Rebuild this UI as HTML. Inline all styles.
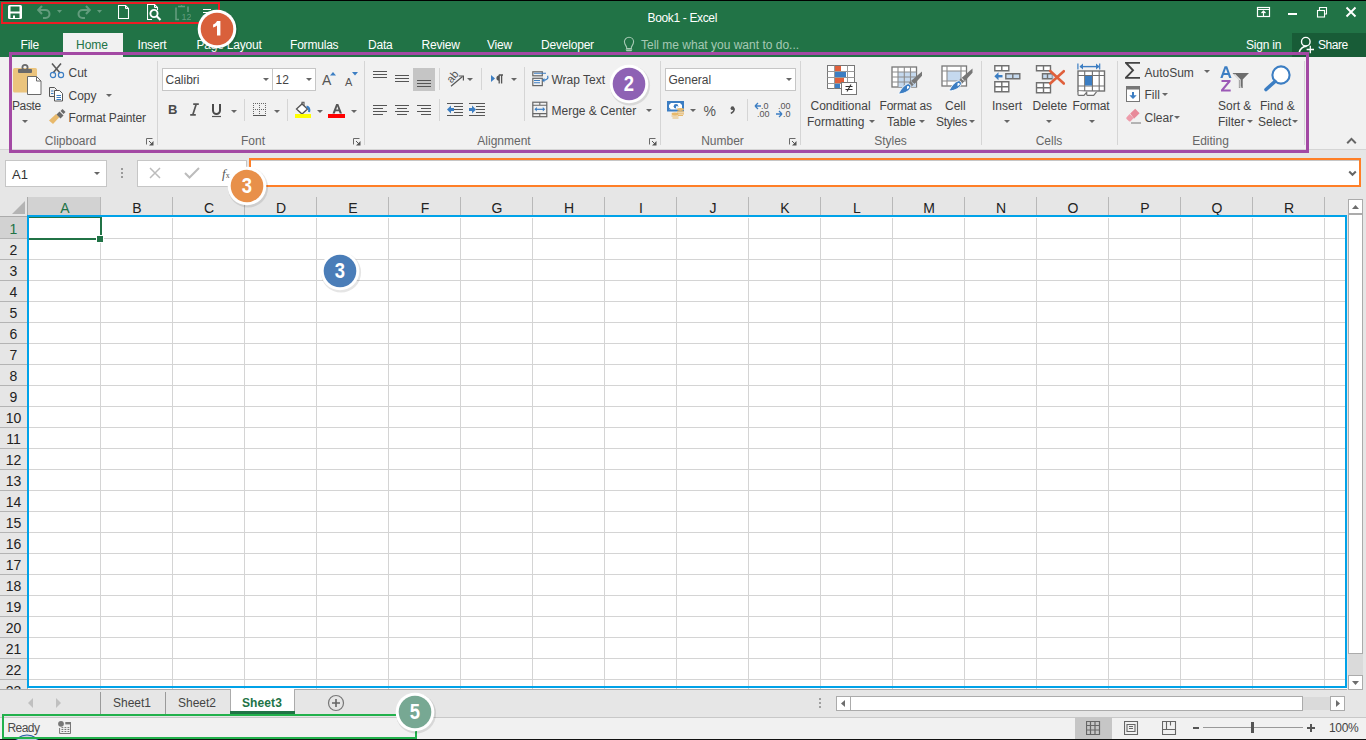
<!DOCTYPE html><html><head><meta charset="utf-8"><style>
html,body{margin:0;padding:0;}
body{width:1366px;height:740px;overflow:hidden;position:relative;background:#fff;font-family:"Liberation Sans", sans-serif;}
.b{position:absolute;box-sizing:border-box;}
.t{position:absolute;white-space:nowrap;font-family:"Liberation Sans", sans-serif;}
</style></head><body>
<div class="b" style="left:0px;top:0px;width:1366px;height:57px;background:#217346"></div>
<div class="b" style="left:0px;top:0px;width:1366px;height:1px;background:#000"></div>
<svg class="b" style="left:8px;top:5px;" width="14" height="14" viewBox="0 0 14 14"><rect x="0" y="0" width="14" height="14" rx="1.5" fill="#fff"/><rect x="2.5" y="1.5" width="9" height="5" fill="#217346"/><rect x="2.5" y="8.5" width="9" height="4.5" fill="#217346"/><rect x="5" y="10.5" width="2" height="2.5" fill="#fff"/></svg>
<svg class="b" style="left:37px;top:5px;" width="15" height="14" viewBox="0 0 15 14"><path d="M5 1L1.2 5 5 9" fill="none" stroke="#639c7d" stroke-width="2"/><path d="M1.5 5H8.5A4 4 0 0 1 8.5 13H6" fill="none" stroke="#639c7d" stroke-width="2"/></svg>
<svg class="b" style="left:57px;top:10px;" width="6" height="4" viewBox="0 0 6 4"><path d="M0 0h5l-2.5 3z" fill="#639c7d"/></svg>
<svg class="b" style="left:77px;top:5px;" width="15" height="14" viewBox="0 0 15 14"><path d="M9 1l3.8 4L9 9" fill="none" stroke="#639c7d" stroke-width="2"/><path d="M12.5 5H5.5A4 4 0 0 0 5.5 13H8" fill="none" stroke="#639c7d" stroke-width="2"/></svg>
<svg class="b" style="left:97px;top:10px;" width="6" height="4" viewBox="0 0 6 4"><path d="M0 0h5l-2.5 3z" fill="#639c7d"/></svg>
<svg class="b" style="left:118px;top:5px;" width="12" height="15" viewBox="0 0 12 15"><path d="M0.5 0.5H7.5L10.5 3.5V13.5H0.5Z" fill="none" stroke="#fff" stroke-width="1.1"/><path d="M7.5 0.5V3.5H10.5" fill="none" stroke="#fff" stroke-width="1"/></svg>
<svg class="b" style="left:147px;top:4px;" width="15" height="17" viewBox="0 0 15 17"><path d="M5 15.5H0.5V0.5H7.5L10.5 3.5V6" fill="none" stroke="#fff" stroke-width="1.1"/><path d="M7.5 0.5V3.5H10.5" fill="none" stroke="#fff" stroke-width="1"/><circle cx="7" cy="9.5" r="3.6" fill="none" stroke="#fff" stroke-width="1.9"/><path d="M9.5 12l4 4" stroke="#fff" stroke-width="2.2"/></svg>
<svg class="b" style="left:175px;top:5px;" width="16" height="16" viewBox="0 0 16 16"><path d="M1 2.5V14.5H4 M3 1.5h7 M13 1.5V7" fill="none" stroke="#639c7d" stroke-width="1.6"/><path d="M6.5 0l2 2h-4z" fill="#639c7d"/><text x="6.5" y="15" font-size="9" font-family="Liberation Sans" fill="#639c7d">12</text></svg>
<svg class="b" style="left:203px;top:8px;" width="10" height="8" viewBox="0 0 10 8"><path d="M0 1.5h8" stroke="#fff" stroke-width="1"/><path d="M0 4.5h8" stroke="#fff" stroke-width="1"/><path d="M1.5 6h5l-2.5 2z" fill="#fff"/></svg>
<div class="t " style="left:647.5px;top:11.03px;font-size:12px;line-height:14px;color:#fff;letter-spacing:-0.35px">Book1 - Excel</div>
<svg class="b" style="left:1256px;top:6px;" width="16" height="12" viewBox="0 0 16 12"><rect x="1.5" y="1.5" width="12" height="9" fill="none" stroke="#fff" stroke-width="1.2"/><path d="M1.5 3.5h12" stroke="#fff" stroke-width="1"/><path d="M7.5 10V5 M5.5 7l2-2 2 2" fill="none" stroke="#fff" stroke-width="1.2"/></svg>
<div class="b" style="left:1288px;top:13px;width:9px;height:2px;background:#fff"></div>
<svg class="b" style="left:1316px;top:6px;" width="12" height="12" viewBox="0 0 12 12"><rect x="1.5" y="4.5" width="7" height="6.5" fill="none" stroke="#fff" stroke-width="1.1"/><path d="M3.5 4.5V1.5h7v6.5H8.5" fill="none" stroke="#fff" stroke-width="1.1"/></svg>
<svg class="b" style="left:1345px;top:6px;" width="12" height="12" viewBox="0 0 12 12"><path d="M1.5 1.5l9 9 M10.5 1.5l-9 9" stroke="#fff" stroke-width="1.9"/></svg>
<div class="b" style="left:63px;top:33px;width:60px;height:24px;background:#f1f1f1"></div>
<div class="b" style="left:1292px;top:33px;width:74px;height:24px;background:#185c37"></div>
<div class="t " style="left:20.5px;top:37.63px;font-size:12px;line-height:14px;color:#fff;letter-spacing:-0.2px">File</div>
<div class="t " style="left:137.5px;top:37.63px;font-size:12px;line-height:14px;color:#fff;letter-spacing:-0.2px">Insert</div>
<div class="t " style="left:196.5px;top:37.63px;font-size:12px;line-height:14px;color:#fff;letter-spacing:-0.2px">Page Layout</div>
<div class="t " style="left:290px;top:37.63px;font-size:12px;line-height:14px;color:#fff;letter-spacing:-0.2px">Formulas</div>
<div class="t " style="left:368px;top:37.63px;font-size:12px;line-height:14px;color:#fff;letter-spacing:-0.2px">Data</div>
<div class="t " style="left:421.5px;top:37.63px;font-size:12px;line-height:14px;color:#fff;letter-spacing:-0.2px">Review</div>
<div class="t " style="left:487px;top:37.63px;font-size:12px;line-height:14px;color:#fff;letter-spacing:-0.2px">View</div>
<div class="t " style="left:541px;top:37.63px;font-size:12px;line-height:14px;color:#fff;letter-spacing:-0.2px">Developer</div>
<div class="t " style="left:1246px;top:37.63px;font-size:12px;line-height:14px;color:#fff;letter-spacing:-0.2px">Sign in</div>
<div class="t " style="left:76px;top:37.63px;font-size:12px;line-height:14px;color:#217346;">Home</div>
<div class="t " style="left:1318px;top:37.63px;font-size:12px;line-height:14px;color:#fff;letter-spacing:-0.45px">Share</div>
<svg class="b" style="left:623px;top:36px;" width="12" height="16" viewBox="0 0 12 16"><path d="M6 1.2A4.6 4.6 0 0 1 10.6 5.8C10.6 8 9.3 9.5 8.4 11V12.6H3.6V11C2.7 9.5 1.4 8 1.4 5.8A4.6 4.6 0 0 1 6 1.2z" fill="none" stroke="#a6c9b4" stroke-width="1.1"/><path d="M2.5 13.6h7l-1 1.6h-5z" fill="#a6c9b4"/></svg>
<div class="t " style="left:641px;top:37.73px;font-size:12px;line-height:14px;color:#a6c9b4;">Tell me what you want to do...</div>
<svg class="b" style="left:1298px;top:36px;" width="17" height="18" viewBox="0 0 17 18"><circle cx="7.8" cy="5.7" r="4.3" fill="none" stroke="#fff" stroke-width="1.4"/><path d="M1.2 16.5c.8-3.6 3.4-6 7.5-6.3" fill="none" stroke="#fff" stroke-width="1.4"/><path d="M12.3 9.8v7.4 M8.6 13.5h7.4" stroke="#fff" stroke-width="1.3"/></svg>
<div class="b" style="left:0px;top:57px;width:1366px;height:92px;background:#f1f1f1"></div>
<div class="b" style="left:0px;top:149px;width:1366px;height:1px;background:#d5d5d5"></div>
<div class="b" style="left:157px;top:61px;width:1px;height:84px;background:#d5d5d5"></div>
<div class="b" style="left:364px;top:61px;width:1px;height:84px;background:#d5d5d5"></div>
<div class="b" style="left:660px;top:61px;width:1px;height:84px;background:#d5d5d5"></div>
<div class="b" style="left:800px;top:61px;width:1px;height:84px;background:#d5d5d5"></div>
<div class="b" style="left:981px;top:61px;width:1px;height:84px;background:#d5d5d5"></div>
<div class="b" style="left:1117px;top:61px;width:1px;height:84px;background:#d5d5d5"></div>
<div class="b" style="left:1304px;top:61px;width:1px;height:84px;background:#d5d5d5"></div>
<div class="b" style="left:244px;top:99px;width:1px;height:22px;background:#d5d5d5"></div>
<div class="b" style="left:287px;top:99px;width:1px;height:22px;background:#d5d5d5"></div>
<div class="b" style="left:439px;top:68px;width:1px;height:22px;background:#d5d5d5"></div>
<div class="b" style="left:439px;top:99px;width:1px;height:22px;background:#d5d5d5"></div>
<div class="b" style="left:481px;top:68px;width:1px;height:22px;background:#d5d5d5"></div>
<div class="b" style="left:524px;top:67px;width:1px;height:54px;background:#d5d5d5"></div>
<div class="b" style="left:747px;top:99px;width:1px;height:22px;background:#d5d5d5"></div>
<div class="t" style="left:10.5px;width:120px;text-align:center;top:134.5px;font-size:12px;line-height:12px;color:#666;">Clipboard</div>
<div class="t" style="left:193px;width:120px;text-align:center;top:134.5px;font-size:12px;line-height:12px;color:#666;">Font</div>
<div class="t" style="left:444px;width:120px;text-align:center;top:134.5px;font-size:12px;line-height:12px;color:#666;">Alignment</div>
<div class="t" style="left:662.5px;width:120px;text-align:center;top:134.5px;font-size:12px;line-height:12px;color:#666;">Number</div>
<div class="t" style="left:830.5px;width:120px;text-align:center;top:134.5px;font-size:12px;line-height:12px;color:#666;">Styles</div>
<div class="t" style="left:989px;width:120px;text-align:center;top:134.5px;font-size:12px;line-height:12px;color:#666;">Cells</div>
<div class="t" style="left:1150.5px;width:120px;text-align:center;top:134.5px;font-size:12px;line-height:12px;color:#666;">Editing</div>
<svg class="b" style="left:146px;top:138px;" width="8" height="8" viewBox="0 0 8 8"><path d="M0.5 6.5V0.5H6.5" fill="none" stroke="#6a6a6a" stroke-width="1"/><path d="M7.5 3v4.5H3z" fill="#555"/><path d="M3 3l3.5 3.5" stroke="#555" stroke-width="1"/></svg>
<svg class="b" style="left:353px;top:138px;" width="8" height="8" viewBox="0 0 8 8"><path d="M0.5 6.5V0.5H6.5" fill="none" stroke="#6a6a6a" stroke-width="1"/><path d="M7.5 3v4.5H3z" fill="#555"/><path d="M3 3l3.5 3.5" stroke="#555" stroke-width="1"/></svg>
<svg class="b" style="left:649px;top:138px;" width="8" height="8" viewBox="0 0 8 8"><path d="M0.5 6.5V0.5H6.5" fill="none" stroke="#6a6a6a" stroke-width="1"/><path d="M7.5 3v4.5H3z" fill="#555"/><path d="M3 3l3.5 3.5" stroke="#555" stroke-width="1"/></svg>
<svg class="b" style="left:789px;top:138px;" width="8" height="8" viewBox="0 0 8 8"><path d="M0.5 6.5V0.5H6.5" fill="none" stroke="#6a6a6a" stroke-width="1"/><path d="M7.5 3v4.5H3z" fill="#555"/><path d="M3 3l3.5 3.5" stroke="#555" stroke-width="1"/></svg>
<svg class="b" style="left:12px;top:63px;" width="31" height="33" viewBox="0 0 31 33"><rect x="1" y="5" width="24" height="24.5" rx="1.5" fill="#ebc47d"/><rect x="6" y="6" width="14" height="4" rx="1" fill="#6a6a6a"/><circle cx="13" cy="4.5" r="2.6" fill="none" stroke="#6a6a6a" stroke-width="1.8"/><path d="M15.5 13.5h9l4.5 4.5v13.5h-13.5z" fill="#fff" stroke="#6a6a6a" stroke-width="1"/><path d="M24.5 13.5v4.5h4.5" fill="none" stroke="#6a6a6a" stroke-width="1"/></svg>
<div class="t " style="left:12px;top:99.03px;font-size:12px;line-height:14px;color:#444;letter-spacing:-0.4px">Paste</div>
<svg class="b" style="left:21.5px;top:120.0px;" width="6" height="4" viewBox="0 0 6 4"><path d="M0 0h6l-3 3z" fill="#666"/></svg>
<svg class="b" style="left:48px;top:62px;" width="17" height="17" viewBox="0 0 17 17"><path d="M4 1.5l8 9.5 M13 1.5L5 11" stroke="#5a5a5a" stroke-width="1.6"/><circle cx="5" cy="13" r="2.6" fill="none" stroke="#3c7ec3" stroke-width="1.2"/><circle cx="13" cy="13" r="2.6" fill="none" stroke="#3c7ec3" stroke-width="1.2"/></svg>
<div class="t " style="left:68.5px;top:66.03px;font-size:12px;line-height:14px;color:#444;">Cut</div>
<svg class="b" style="left:48px;top:86px;" width="17" height="16" viewBox="0 0 17 16"><path d="M1.5 1.5h5l2 2v1.5 M1.5 1.5v9h4.5" fill="none" stroke="#555" stroke-width="1"/><path d="M6.5 4.5h5l3 3v7.5h-8z" fill="#fff" stroke="#555" stroke-width="1"/><path d="M3 5h2.5M3 7.5h2.5M8.5 9.5h4.5M8.5 11.5h4.5M8.5 13.5h4.5" stroke="#3c7ec3" stroke-width="1"/></svg>
<div class="t " style="left:68.5px;top:89.03px;font-size:12px;line-height:14px;color:#444;">Copy</div>
<svg class="b" style="left:105.5px;top:93.5px;" width="6" height="4" viewBox="0 0 6 4"><path d="M0 0h6l-3 3z" fill="#666"/></svg>
<svg class="b" style="left:48px;top:109px;" width="18" height="16" viewBox="0 0 18 16"><path d="M8 5L1 11.5 5 15 11.5 8z" fill="#e8b96b"/><path d="M8.5 5.5l3-3 4 4-3 3z" fill="#6a6a6a"/><path d="M12.5 2l2-2 3 3-2 2z" fill="#6a6a6a"/></svg>
<div class="t " style="left:68.5px;top:111.03px;font-size:12px;line-height:14px;color:#444;letter-spacing:-0.15px">Format Painter</div>
<div class="b" style="left:162px;top:68px;width:111px;height:23px;background:#fff;border:1px solid #c6c6c6"></div>
<div class="b" style="left:272px;top:68px;width:44px;height:23px;background:#fff;border:1px solid #c6c6c6"></div>
<div class="t " style="left:165.5px;top:73.03px;font-size:12px;line-height:14px;color:#444;">Calibri</div>
<div class="t " style="left:275.5px;top:73.03px;font-size:12px;line-height:14px;color:#444;">12</div>
<svg class="b" style="left:262.5px;top:78.0px;" width="6" height="4" viewBox="0 0 6 4"><path d="M0 0h6l-3 3z" fill="#666"/></svg>
<svg class="b" style="left:305.5px;top:78.0px;" width="6" height="4" viewBox="0 0 6 4"><path d="M0 0h6l-3 3z" fill="#666"/></svg>
<div class="t " style="left:322px;top:72.37px;font-size:14px;line-height:17px;color:#555;">A</div>
<svg class="b" style="left:330px;top:72px;" width="6" height="4" viewBox="0 0 6 4"><path d="M0 3.5h6L3 0z" fill="#3c7ec3"/></svg>
<div class="t " style="left:345px;top:75.86px;font-size:11px;line-height:13px;color:#555;">A</div>
<svg class="b" style="left:352px;top:72px;" width="6" height="4" viewBox="0 0 6 4"><path d="M0 0h6L3 3.5z" fill="#3c7ec3"/></svg>
<div class="t " style="left:168px;top:101.70px;font-size:13px;line-height:16px;color:#4a4a4a;"><b>B</b></div>
<svg class="b" style="left:189px;top:103px;" width="11" height="13" viewBox="0 0 11 13"><path d="M4.2 1.2h5.6 M1.2 11.8h5.6 M7.2 1.2L3.8 11.8" fill="none" stroke="#555" stroke-width="1.7"/></svg>
<svg class="b" style="left:211px;top:103px;" width="11" height="15" viewBox="0 0 11 15"><path d="M2 1v6.5a3.5 3.5 0 0 0 7 0V1" fill="none" stroke="#4a4a4a" stroke-width="2"/><path d="M1 13.5h9" stroke="#555" stroke-width="1.2"/></svg>
<svg class="b" style="left:230.5px;top:109.5px;" width="6" height="4" viewBox="0 0 6 4"><path d="M0 0h6l-3 3z" fill="#666"/></svg>
<svg class="b" style="left:253px;top:103px;" width="14" height="14" viewBox="0 0 14 14"><rect x="0" y="0" width="1" height="1" fill="#666"/><rect x="2" y="0" width="1" height="1" fill="#666"/><rect x="4" y="0" width="1" height="1" fill="#666"/><rect x="6" y="0" width="1" height="1" fill="#666"/><rect x="8" y="0" width="1" height="1" fill="#666"/><rect x="10" y="0" width="1" height="1" fill="#666"/><rect x="12" y="0" width="1" height="1" fill="#666"/><rect x="0" y="2" width="1" height="1" fill="#666"/><rect x="6" y="2" width="1" height="1" fill="#666"/><rect x="12" y="2" width="1" height="1" fill="#666"/><rect x="0" y="4" width="1" height="1" fill="#666"/><rect x="6" y="4" width="1" height="1" fill="#666"/><rect x="12" y="4" width="1" height="1" fill="#666"/><rect x="0" y="6" width="1" height="1" fill="#666"/><rect x="2" y="6" width="1" height="1" fill="#666"/><rect x="4" y="6" width="1" height="1" fill="#666"/><rect x="6" y="6" width="1" height="1" fill="#666"/><rect x="8" y="6" width="1" height="1" fill="#666"/><rect x="10" y="6" width="1" height="1" fill="#666"/><rect x="12" y="6" width="1" height="1" fill="#666"/><rect x="0" y="8" width="1" height="1" fill="#666"/><rect x="6" y="8" width="1" height="1" fill="#666"/><rect x="12" y="8" width="1" height="1" fill="#666"/><rect x="0" y="10" width="1" height="1" fill="#666"/><rect x="6" y="10" width="1" height="1" fill="#666"/><rect x="12" y="10" width="1" height="1" fill="#666"/><rect x="0" y="12" width="13" height="1" fill="#555"/></svg>
<svg class="b" style="left:273.5px;top:109.5px;" width="6" height="4" viewBox="0 0 6 4"><path d="M0 0h6l-3 3z" fill="#666"/></svg>
<svg class="b" style="left:294px;top:101px;" width="18" height="17" viewBox="0 0 18 17"><path d="M2.5 8l5.5-5 5.5 5-5.5 5z" fill="#fff" stroke="#555" stroke-width="1.3"/><path d="M8 3.5V1.2h2V5" fill="none" stroke="#555" stroke-width="1.1"/><path d="M12.5 5.5c2 .5 3.5 2.5 2.5 5.5" fill="none" stroke="#3c7ec3" stroke-width="2.2"/><rect x="1" y="13" width="16" height="4" fill="#ffff00"/></svg>
<svg class="b" style="left:316.5px;top:109.5px;" width="6" height="4" viewBox="0 0 6 4"><path d="M0 0h6l-3 3z" fill="#666"/></svg>
<svg class="b" style="left:327px;top:100px;" width="19" height="18" viewBox="0 0 19 18"><path d="M5.5 13.5L9.2 4h2.1l3.7 9.5h-2.3l-.8-2.3H8.6l-.8 2.3z M9.2 9.4h2.2L10.3 6.2z" fill="#555" fill-rule="evenodd"/><rect x="1" y="14" width="17" height="4" fill="#f00"/></svg>
<svg class="b" style="left:350.5px;top:109.5px;" width="6" height="4" viewBox="0 0 6 4"><path d="M0 0h6l-3 3z" fill="#666"/></svg>
<div class="b" style="left:413px;top:68px;width:22px;height:23px;background:#c5c5c5"></div>
<div class="b" style="left:373px;top:71px;width:14px;height:1px;background:#555"></div>
<div class="b" style="left:373px;top:74px;width:14px;height:1px;background:#555"></div>
<div class="b" style="left:373px;top:77px;width:14px;height:1px;background:#555"></div>
<div class="b" style="left:395px;top:75px;width:14px;height:1px;background:#555"></div>
<div class="b" style="left:395px;top:78px;width:14px;height:1px;background:#555"></div>
<div class="b" style="left:395px;top:81px;width:14px;height:1px;background:#555"></div>
<div class="b" style="left:417px;top:80px;width:14px;height:1px;background:#555"></div>
<div class="b" style="left:417px;top:83px;width:14px;height:1px;background:#555"></div>
<div class="b" style="left:417px;top:86px;width:14px;height:1px;background:#555"></div>
<div class="b" style="left:373px;top:105px;width:14px;height:1px;background:#555"></div>
<div class="b" style="left:373px;top:108px;width:10px;height:1px;background:#555"></div>
<div class="b" style="left:373px;top:111px;width:14px;height:1px;background:#555"></div>
<div class="b" style="left:373px;top:114px;width:10px;height:1px;background:#555"></div>
<div class="b" style="left:395px;top:105px;width:14px;height:1px;background:#555"></div>
<div class="b" style="left:397px;top:108px;width:10px;height:1px;background:#555"></div>
<div class="b" style="left:395px;top:111px;width:14px;height:1px;background:#555"></div>
<div class="b" style="left:397px;top:114px;width:10px;height:1px;background:#555"></div>
<div class="b" style="left:417px;top:105px;width:14px;height:1px;background:#555"></div>
<div class="b" style="left:421px;top:108px;width:10px;height:1px;background:#555"></div>
<div class="b" style="left:417px;top:111px;width:14px;height:1px;background:#555"></div>
<div class="b" style="left:421px;top:114px;width:10px;height:1px;background:#555"></div>
<svg class="b" style="left:446px;top:70px;" width="20" height="18" viewBox="0 0 20 18"><g transform="translate(-0.5 -1.8) rotate(-50 7 8)"><text x="0.5" y="12" font-size="11" font-family="Liberation Sans" fill="#555">ab</text></g><path d="M5 16.2L16.5 6.5" stroke="#555" stroke-width="1.2"/><path d="M12.8 6h4.6v4.6" fill="none" stroke="#555" stroke-width="1.2"/></svg>
<svg class="b" style="left:466.5px;top:77.5px;" width="6" height="4" viewBox="0 0 6 4"><path d="M0 0h6l-3 3z" fill="#666"/></svg>
<svg class="b" style="left:490px;top:74px;" width="14" height="10" viewBox="0 0 14 10"><path d="M1 1l4 3.5-4 3.5z" fill="#3c7ec3"/><path d="M9 1.5A2.6 2.6 0 0 0 9 6.7z" fill="#555"/><path d="M8.8 1h4.2 M9.2 1v8.5 M11.6 1v8.5" stroke="#555" stroke-width="1.3"/></svg>
<svg class="b" style="left:510.5px;top:77.5px;" width="6" height="4" viewBox="0 0 6 4"><path d="M0 0h6l-3 3z" fill="#666"/></svg>
<svg class="b" style="left:446px;top:101px;" width="19" height="17" viewBox="0 0 19 17"><path d="M1 2.5h16 M8 5.5h9 M8 8.5h9 M8 11.5h9 M1 14.5h16" stroke="#555" stroke-width="1"/><path d="M1 8.5l4-4v2.5h3v3h-3v2.5z" fill="#3c7ec3"/></svg>
<svg class="b" style="left:468px;top:101px;" width="19" height="17" viewBox="0 0 19 17"><path d="M1 2.5h16 M8 5.5h9 M8 8.5h9 M8 11.5h9 M1 14.5h16" stroke="#555" stroke-width="1"/><path d="M8 8.5l-4-4v2.5h-3v3h3v2.5z" fill="#3c7ec3"/></svg>
<svg class="b" style="left:532px;top:70px;" width="18" height="17" viewBox="0 0 18 17"><rect x="0.8" y="1.8" width="9.5" height="4" fill="none" stroke="#666" stroke-width="1.2"/><rect x="0.8" y="8.3" width="9.5" height="7.3" fill="none" stroke="#666" stroke-width="1.2"/><path d="M2 3.3h12 M2 10.5h6 M2 12.7h6" stroke="#3c7ec3" stroke-width="1.1"/><path d="M15.6 5.8c1 2.4-.4 4.5-4.6 4.5" fill="none" stroke="#3c7ec3" stroke-width="1.2"/><path d="M10 10.3l2.4-2.2v4.4z" fill="#3c7ec3"/></svg>
<div class="t " style="left:551.5px;top:73.03px;font-size:12px;line-height:14px;color:#444;">Wrap Text</div>
<svg class="b" style="left:532px;top:101px;" width="17" height="17" viewBox="0 0 17 17"><rect x="0.8" y="1.2" width="14" height="14.5" fill="none" stroke="#666" stroke-width="1.2"/><path d="M0.8 4.3h14 M0.8 12.6h14 M7.8 1.2v3.1 M7.8 12.6v3.1" stroke="#666" stroke-width="1.1"/><path d="M4 8.3h7.5" stroke="#3c7ec3" stroke-width="1.2"/><path d="M2.4 8.3l2.4-2.2v4.4z M13.2 8.3l-2.4-2.2v4.4z" fill="#3c7ec3"/></svg>
<div class="t " style="left:551.5px;top:104.03px;font-size:12px;line-height:14px;color:#444;">Merge &amp; Center</div>
<svg class="b" style="left:645.5px;top:108.5px;" width="6" height="4" viewBox="0 0 6 4"><path d="M0 0h6l-3 3z" fill="#666"/></svg>
<div class="b" style="left:665px;top:68px;width:131px;height:23px;background:#fff;border:1px solid #c6c6c6"></div>
<div class="t " style="left:668.5px;top:73.03px;font-size:12px;line-height:14px;color:#444;">General</div>
<svg class="b" style="left:785.5px;top:78.0px;" width="6" height="4" viewBox="0 0 6 4"><path d="M0 0h6l-3 3z" fill="#666"/></svg>
<svg class="b" style="left:667px;top:101px;" width="19" height="18" viewBox="0 0 19 18"><path d="M1 1h15v8.5H1z" fill="#fff" stroke="#3c7ec3" stroke-width="2"/><path d="M2 2h2l-2 2z M15 2h-2l2 2z M2 8.5h2l-2-2z" fill="#3c7ec3"/><circle cx="9" cy="5.2" r="2.3" fill="#3c7ec3"/><path d="M9 5.2h2.3A2.3 2.3 0 0 1 9 7.5z" fill="#fff"/><ellipse cx="13.5" cy="8.5" rx="3.5" ry="1.4" fill="#e8b96b"/><path d="M10 10.8h7 M10.5 12.8h6.5 M11 14.5h5" stroke="#e8b96b" stroke-width="1.2"/><ellipse cx="8" cy="13" rx="3.5" ry="1.4" fill="#e8b96b"/><path d="M4.5 15h7 M5.5 17h6" stroke="#e8b96b" stroke-width="1.2"/></svg>
<svg class="b" style="left:689.5px;top:108.5px;" width="6" height="4" viewBox="0 0 6 4"><path d="M0 0h6l-3 3z" fill="#666"/></svg>
<div class="t " style="left:703.5px;top:102.87px;font-size:14px;line-height:17px;color:#555;">%</div>
<svg class="b" style="left:728px;top:105px;" width="8" height="9" viewBox="0 0 8 9"><circle cx="4.5" cy="3.2" r="1.9" fill="#555"/><path d="M6.3 3.5c0 2.5-1.5 4-3.5 5" fill="none" stroke="#555" stroke-width="1.4"/></svg>
<svg class="b" style="left:754px;top:101px;" width="17" height="17" viewBox="0 0 17 17"><path d="M1 5h6 M1 5l3-3 M1 5l3 3" fill="none" stroke="#3c7ec3" stroke-width="1.3"/><text x="7" y="8" font-size="9" font-family="Liberation Sans" fill="#555">.0</text><text x="3" y="16" font-size="9" font-family="Liberation Sans" fill="#555">.00</text></svg>
<svg class="b" style="left:775px;top:101px;" width="17" height="17" viewBox="0 0 17 17"><text x="3" y="8" font-size="9" font-family="Liberation Sans" fill="#555">.00</text><path d="M1 13h6 M7 13l-3-3 M7 13l-3 3" fill="none" stroke="#3c7ec3" stroke-width="1.3"/><text x="8" y="16" font-size="9" font-family="Liberation Sans" fill="#555">.0</text></svg>
<svg class="b" style="left:827px;top:65px;" width="31" height="31" viewBox="0 0 31 31"><rect x="0.5" y="0.5" width="27" height="23" fill="#fff" stroke="#777"/><path d="M0.5 6.5h27 M0.5 12.5h27 M0.5 18.5h27 M7.5 0.5v23 M20.5 0.5v23" stroke="#999"/><rect x="8" y="1" width="6" height="5" fill="#e0603c"/><rect x="8" y="7" width="11" height="5" fill="#3c7ec3"/><rect x="8" y="13" width="9" height="5" fill="#e0603c"/><rect x="8" y="19" width="5" height="4" fill="#3c7ec3"/><rect x="14.5" y="17.5" width="15" height="12" fill="#fff" stroke="#777"/><path d="M18.5 21.5h7 M18.5 24.5h7 M24 19.5l-4 7" stroke="#333" stroke-width="1.1"/></svg>
<div class="t " style="left:810.5px;top:99.03px;font-size:12px;line-height:14px;color:#444;">Conditional</div>
<div class="t " style="left:807px;top:114.53px;font-size:12px;line-height:14px;color:#444;">Formatting</div>
<svg class="b" style="left:868.5px;top:120.0px;" width="6" height="4" viewBox="0 0 6 4"><path d="M0 0h6l-3 3z" fill="#666"/></svg>
<svg class="b" style="left:891px;top:66px;" width="33" height="30" viewBox="0 0 33 30"><rect x="1" y="1" width="24.5" height="20" fill="#fff" stroke="#777" stroke-width="1.3"/><rect x="7" y="6" width="18" height="15" fill="#c5d9ee"/><path d="M1 6h24.5 M1 11h24.5 M1 16h24.5 M7 1v20 M13.3 1v20 M19.5 1v20" stroke="#8c8c8c" stroke-width="1.1"/><g transform="translate(0.5 0)"><path d="M30.5 5.5v4.2l-7.6 8.2-3.2-3.2z" fill="#777"/><path d="M19 15.3l3.2 3.2-2.4 2.4-3.2-3.2z" fill="#777"/><path d="M7 28c2-4.5 5.5-8.8 9.2-10.2 1.4-.5 3.3.9 3.2 2.6-.3 3.6-5.6 7.4-12.4 7.6z" fill="#3c7ec3" stroke="#fff" stroke-width="0.9"/><path d="M15.5 20.5c1-.8 2.2-.4 2.2.7-.5 1-1.2 1.6-2.2 2z" fill="#fff"/></g></svg>
<div class="t " style="left:879.5px;top:99.03px;font-size:12px;line-height:14px;color:#444;letter-spacing:-0.2px">Format as</div>
<div class="t " style="left:887px;top:114.53px;font-size:12px;line-height:14px;color:#444;">Table</div>
<svg class="b" style="left:918.5px;top:120.0px;" width="6" height="4" viewBox="0 0 6 4"><path d="M0 0h6l-3 3z" fill="#666"/></svg>
<svg class="b" style="left:941px;top:65px;" width="33" height="30" viewBox="0 0 33 30"><rect x="1" y="1" width="24.5" height="20" fill="#fff" stroke="#777" stroke-width="1.3"/><rect x="6" y="6" width="14" height="10" fill="#c5d9ee"/><path d="M1 6h24.5 M1 16h24.5 M6 1v20 M20 1v20" stroke="#8c8c8c" stroke-width="1.1"/><g transform="translate(1 -2)"><path d="M30.5 5.5v4.2l-7.6 8.2-3.2-3.2z" fill="#777"/><path d="M19 15.3l3.2 3.2-2.4 2.4-3.2-3.2z" fill="#777"/><path d="M7 28c2-4.5 5.5-8.8 9.2-10.2 1.4-.5 3.3.9 3.2 2.6-.3 3.6-5.6 7.4-12.4 7.6z" fill="#3c7ec3" stroke="#fff" stroke-width="0.9"/><path d="M15.5 20.5c1-.8 2.2-.4 2.2.7-.5 1-1.2 1.6-2.2 2z" fill="#fff"/></g></svg>
<div class="t " style="left:945px;top:99.03px;font-size:12px;line-height:14px;color:#444;">Cell</div>
<div class="t " style="left:936px;top:114.53px;font-size:12px;line-height:14px;color:#444;letter-spacing:-0.3px">Styles</div>
<svg class="b" style="left:968.5px;top:120.0px;" width="6" height="4" viewBox="0 0 6 4"><path d="M0 0h6l-3 3z" fill="#666"/></svg>
<svg class="b" style="left:993px;top:64px;" width="29" height="30" viewBox="0 0 29 30"><path d="M1.8 1.8h14v5h-14z M8.8 1.8v5" fill="#fff" stroke="#707070" stroke-width="1.4"/><path d="M12.8 9.7h14v5h-14z M19.8 9.7v5" fill="#c5d9ee" stroke="#707070" stroke-width="1.4"/><path d="M4.5 12.2h5" stroke="#3c7ec3" stroke-width="2.4"/><path d="M1.3 12.2l4.2-4v8z" fill="#3c7ec3"/><path d="M1.8 17.8h14v10h-14z M8.8 17.8v10 M1.8 22.8h14" fill="#fff" stroke="#707070" stroke-width="1.4"/></svg>
<div class="t " style="left:992px;top:99.03px;font-size:12px;line-height:14px;color:#444;">Insert</div>
<svg class="b" style="left:1003.5px;top:120.0px;" width="6" height="4" viewBox="0 0 6 4"><path d="M0 0h6l-3 3z" fill="#666"/></svg>
<svg class="b" style="left:1035px;top:64px;" width="30" height="30" viewBox="0 0 30 30"><path d="M1.5 1.8h14v5h-14z M8.5 1.8v5" fill="#fff" stroke="#707070" stroke-width="1.4"/><path d="M7.5 9.7h10v5h-10z M12.5 9.7v5" fill="#c5d9ee" stroke="#707070" stroke-width="1.4"/><path d="M17.5 9.5l3 2.7-3 2.7z" fill="#c5d9ee"/><path d="M1.5 18.8h14v10h-14z M8.5 18.8v10 M1.5 23.8h14" fill="#fff" stroke="#707070" stroke-width="1.4"/><path d="M15.2 7l13.6 12.5 M28.8 7.2L15.2 19.5" stroke="#e0603c" stroke-width="2.6" stroke-linecap="round"/></svg>
<div class="t " style="left:1032.5px;top:99.03px;font-size:12px;line-height:14px;color:#444;">Delete</div>
<svg class="b" style="left:1045.5px;top:120.0px;" width="6" height="4" viewBox="0 0 6 4"><path d="M0 0h6l-3 3z" fill="#666"/></svg>
<svg class="b" style="left:1077px;top:63px;" width="29" height="34" viewBox="0 0 29 34"><path d="M3 3.6h19" stroke="#3c7ec3" stroke-width="1.4"/><path d="M2.5 3.6l3.5-3v6z M22.5 3.6l-3.5-3v6z" fill="#3c7ec3"/><path d="M0.9 0.5v6 M22.7 0.5v6" stroke="#3c7ec3" stroke-width="1.2"/><rect x="1" y="8" width="26.5" height="20" fill="#fff" stroke="#707070" stroke-width="1.4"/><path d="M1 12.5h26.5 M1 23h26.5 M7.7 8v20 M15.4 8v20 M22.2 8v20" stroke="#707070" stroke-width="1.1"/><rect x="8" y="13" width="7" height="9.5" fill="#3c7ec3"/><path d="M1 28v3.5c0 .5.3.8.8.8h5.2l3-3.5 M9.7 28.8v2.7c0 .5.3.8.8.8h6.2l2.8-3.5" fill="#fff" stroke="#707070" stroke-width="1.2"/></svg>
<div class="t " style="left:1072.5px;top:99.03px;font-size:12px;line-height:14px;color:#444;letter-spacing:-0.2px">Format</div>
<svg class="b" style="left:1088.5px;top:120.0px;" width="6" height="4" viewBox="0 0 6 4"><path d="M0 0h6l-3 3z" fill="#666"/></svg>
<svg class="b" style="left:1125px;top:62px;" width="16" height="17" viewBox="0 0 16 17"><path d="M15 0.7H0.8L8 8.3 0.8 15.9H15" fill="none" stroke="#444" stroke-width="1.9" stroke-linejoin="miter"/></svg>
<div class="t " style="left:1144.5px;top:66.03px;font-size:12px;line-height:14px;color:#444;">AutoSum</div>
<svg class="b" style="left:1203.5px;top:69.5px;" width="6" height="4" viewBox="0 0 6 4"><path d="M0 0h6l-3 3z" fill="#666"/></svg>
<svg class="b" style="left:1126px;top:86px;" width="15" height="16" viewBox="0 0 15 16"><rect x="0.5" y="0.5" width="13" height="15" fill="#fff" stroke="#777"/><rect x="0" y="0" width="14" height="3.5" fill="#777"/><path d="M7 6v5.5" stroke="#3c7ec3" stroke-width="2"/><path d="M3.3 9.3L7 13l3.7-3.7z" fill="#3c7ec3"/></svg>
<div class="t " style="left:1144.5px;top:88.03px;font-size:12px;line-height:14px;color:#444;">Fill</div>
<svg class="b" style="left:1161.5px;top:93.0px;" width="6" height="4" viewBox="0 0 6 4"><path d="M0 0h6l-3 3z" fill="#666"/></svg>
<svg class="b" style="left:1125px;top:108px;" width="16" height="16" viewBox="0 0 16 16"><path d="M5.2 5.4l5-4.6 4.4 4.4-5.6 5.6z" fill="#e88a9a"/><path d="M4.6 6l4 4-2.9 3.2c-.6.5-1.2.5-1.7.1L1.6 10.9c-.5-.6-.5-1.2.1-1.7z" fill="#ee9cab"/><path d="M6 15h10" stroke="#777" stroke-width="1"/></svg>
<div class="t " style="left:1144.5px;top:111.03px;font-size:12px;line-height:14px;color:#444;">Clear</div>
<svg class="b" style="left:1173.5px;top:116.0px;" width="6" height="4" viewBox="0 0 6 4"><path d="M0 0h6l-3 3z" fill="#666"/></svg>
<svg class="b" style="left:1220px;top:65px;" width="30" height="28" viewBox="0 0 30 28"><path d="M0.3 13L4.6 1.2h2.6L11.5 13H9.2l-1.1-3.1H3.7L2.6 13z M4.3 8h3.2L5.9 3.5z" fill="#3c7ec3" fill-rule="evenodd"/><path d="M1.5 15h9v1.8L4 24.6h6.7v2H1v-1.8l6.5-7.8H1.5z" fill="#9b59b6"/><path d="M12.5 8h16.5l-6.3 6.5v8.5h-3.8v-8.5z" fill="#6d6d6d"/><path d="M14.5 9.2l5.6 5.6v7.4h1.4" fill="none" stroke="#f1f1f1" stroke-width="1.1"/></svg>
<div class="t " style="left:1218px;top:99.03px;font-size:12px;line-height:14px;color:#444;">Sort &amp;</div>
<div class="t " style="left:1218px;top:114.53px;font-size:12px;line-height:14px;color:#444;">Filter</div>
<svg class="b" style="left:1246.5px;top:120.0px;" width="6" height="4" viewBox="0 0 6 4"><path d="M0 0h6l-3 3z" fill="#666"/></svg>
<svg class="b" style="left:1263px;top:64px;" width="30" height="29" viewBox="0 0 30 29"><circle cx="18" cy="11" r="8.6" fill="#fff" stroke="#3c7ec3" stroke-width="2.1"/><path d="M12 17.5l-9 8" stroke="#3c7ec3" stroke-width="3.6" stroke-linecap="round"/></svg>
<div class="t " style="left:1260px;top:99.03px;font-size:12px;line-height:14px;color:#444;">Find &amp;</div>
<div class="t " style="left:1258px;top:114.53px;font-size:12px;line-height:14px;color:#444;">Select</div>
<svg class="b" style="left:1291.5px;top:120.0px;" width="6" height="4" viewBox="0 0 6 4"><path d="M0 0h6l-3 3z" fill="#666"/></svg>
<svg class="b" style="left:1346px;top:137px;" width="11" height="8" viewBox="0 0 11 8"><path d="M1.2 6.2l4.3-4.3 4.3 4.3" fill="none" stroke="#666" stroke-width="2"/></svg>
<div class="b" style="left:0px;top:150px;width:1366px;height:47px;background:#e6e6e6"></div>
<div class="b" style="left:5px;top:160px;width:102px;height:27px;background:#fff;border:1px solid #c6c6c6"></div>
<div class="t " style="left:12px;top:166.70px;font-size:13px;line-height:16px;color:#333;">A1</div>
<svg class="b" style="left:93.5px;top:172.0px;" width="6" height="4" viewBox="0 0 6 4"><path d="M0 0h6l-3 3z" fill="#666"/></svg>
<div class="b" style="left:121px;top:168px;width:2px;height:2px;background:#9a9a9a"></div>
<div class="b" style="left:121px;top:172px;width:2px;height:2px;background:#9a9a9a"></div>
<div class="b" style="left:121px;top:176px;width:2px;height:2px;background:#9a9a9a"></div>
<div class="b" style="left:137px;top:160px;width:110px;height:27px;background:#fff;border:1px solid #c6c6c6"></div>
<svg class="b" style="left:149px;top:167px;" width="12" height="12" viewBox="0 0 12 12"><path d="M1 1l10 10 M11 1L1 11" stroke="#bcbcbc" stroke-width="1.5"/></svg>
<svg class="b" style="left:184px;top:166px;" width="16" height="13" viewBox="0 0 16 13"><path d="M1 7l4.5 4.5L15 2" fill="none" stroke="#bcbcbc" stroke-width="2"/></svg>
<div class="t " style="left:222px;top:165.70px;font-size:13px;line-height:16px;color:#555;font-family:'Liberation Serif'"><i>f</i><span style="font-size:8px">x</span></div>
<div class="b" style="left:250px;top:160px;width:1110px;height:27px;background:#fff;border:1px solid #c6c6c6"></div>
<svg class="b" style="left:1348px;top:170px;" width="9" height="7" viewBox="0 0 9 7"><path d="M1.2 1.5l3.3 3.3 3.3-3.3" fill="none" stroke="#666" stroke-width="2"/></svg>
<div class="b" style="left:0px;top:197px;width:1347px;height:20px;background:#e6e6e6"></div>
<div class="b" style="left:0px;top:217px;width:28px;height:472px;background:#e6e6e6"></div>
<div class="b" style="left:28px;top:197px;width:72px;height:20px;background:#d2d2d2"></div>
<div class="b" style="left:0px;top:217px;width:28px;height:22px;background:#d2d2d2"></div>
<div class="b" style="left:27px;top:197px;width:1px;height:492px;background:#ababab"></div>
<div class="b" style="left:0px;top:216px;width:1347px;height:1px;background:#ababab"></div>
<svg class="b" style="left:12px;top:201px;" width="14" height="14" viewBox="0 0 14 14"><path d="M13 0v13H0z" fill="#b4b4b4"/></svg>
<div class="b" style="left:29px;top:218px;width:1318px;height:471px;background-color:#fff;background-image:linear-gradient(to right, transparent 71px, #d4d4d4 71px),linear-gradient(to bottom, transparent 20px, #d4d4d4 20px);background-size:72px 21px;"></div>
<div class="b" style="left:28px;top:217px;width:1px;height:472px;background:#fff"></div>
<div class="b" style="left:28px;top:217px;width:1319px;height:1px;background:#fff"></div>
<div class="b" style="left:100px;top:197px;width:1px;height:19px;background:#b8b8b8"></div>
<div class="b" style="left:172px;top:197px;width:1px;height:19px;background:#b8b8b8"></div>
<div class="b" style="left:244px;top:197px;width:1px;height:19px;background:#b8b8b8"></div>
<div class="b" style="left:316px;top:197px;width:1px;height:19px;background:#b8b8b8"></div>
<div class="b" style="left:388px;top:197px;width:1px;height:19px;background:#b8b8b8"></div>
<div class="b" style="left:460px;top:197px;width:1px;height:19px;background:#b8b8b8"></div>
<div class="b" style="left:532px;top:197px;width:1px;height:19px;background:#b8b8b8"></div>
<div class="b" style="left:604px;top:197px;width:1px;height:19px;background:#b8b8b8"></div>
<div class="b" style="left:676px;top:197px;width:1px;height:19px;background:#b8b8b8"></div>
<div class="b" style="left:748px;top:197px;width:1px;height:19px;background:#b8b8b8"></div>
<div class="b" style="left:820px;top:197px;width:1px;height:19px;background:#b8b8b8"></div>
<div class="b" style="left:892px;top:197px;width:1px;height:19px;background:#b8b8b8"></div>
<div class="b" style="left:964px;top:197px;width:1px;height:19px;background:#b8b8b8"></div>
<div class="b" style="left:1036px;top:197px;width:1px;height:19px;background:#b8b8b8"></div>
<div class="b" style="left:1108px;top:197px;width:1px;height:19px;background:#b8b8b8"></div>
<div class="b" style="left:1180px;top:197px;width:1px;height:19px;background:#b8b8b8"></div>
<div class="b" style="left:1252px;top:197px;width:1px;height:19px;background:#b8b8b8"></div>
<div class="b" style="left:1324px;top:197px;width:1px;height:19px;background:#b8b8b8"></div>
<div class="b" style="left:0px;top:238px;width:27px;height:1px;background:#b4b4b4"></div>
<div class="b" style="left:0px;top:259px;width:27px;height:1px;background:#b4b4b4"></div>
<div class="b" style="left:0px;top:280px;width:27px;height:1px;background:#b4b4b4"></div>
<div class="b" style="left:0px;top:301px;width:27px;height:1px;background:#b4b4b4"></div>
<div class="b" style="left:0px;top:322px;width:27px;height:1px;background:#b4b4b4"></div>
<div class="b" style="left:0px;top:343px;width:27px;height:1px;background:#b4b4b4"></div>
<div class="b" style="left:0px;top:364px;width:27px;height:1px;background:#b4b4b4"></div>
<div class="b" style="left:0px;top:385px;width:27px;height:1px;background:#b4b4b4"></div>
<div class="b" style="left:0px;top:406px;width:27px;height:1px;background:#b4b4b4"></div>
<div class="b" style="left:0px;top:427px;width:27px;height:1px;background:#b4b4b4"></div>
<div class="b" style="left:0px;top:448px;width:27px;height:1px;background:#b4b4b4"></div>
<div class="b" style="left:0px;top:469px;width:27px;height:1px;background:#b4b4b4"></div>
<div class="b" style="left:0px;top:490px;width:27px;height:1px;background:#b4b4b4"></div>
<div class="b" style="left:0px;top:511px;width:27px;height:1px;background:#b4b4b4"></div>
<div class="b" style="left:0px;top:532px;width:27px;height:1px;background:#b4b4b4"></div>
<div class="b" style="left:0px;top:553px;width:27px;height:1px;background:#b4b4b4"></div>
<div class="b" style="left:0px;top:574px;width:27px;height:1px;background:#b4b4b4"></div>
<div class="b" style="left:0px;top:595px;width:27px;height:1px;background:#b4b4b4"></div>
<div class="b" style="left:0px;top:616px;width:27px;height:1px;background:#b4b4b4"></div>
<div class="b" style="left:0px;top:637px;width:27px;height:1px;background:#b4b4b4"></div>
<div class="b" style="left:0px;top:658px;width:27px;height:1px;background:#b4b4b4"></div>
<div class="b" style="left:0px;top:679px;width:27px;height:1px;background:#b4b4b4"></div>
<div class="b" style="left:0px;top:700px;width:27px;height:1px;background:#b4b4b4"></div>
<div class="t" style="left:35px;width:60px;text-align:center;top:200px;font-size:14px;line-height:16px;color:#217346;">A</div>
<div class="t" style="left:107px;width:60px;text-align:center;top:200px;font-size:14px;line-height:16px;color:#222;">B</div>
<div class="t" style="left:179px;width:60px;text-align:center;top:200px;font-size:14px;line-height:16px;color:#222;">C</div>
<div class="t" style="left:251px;width:60px;text-align:center;top:200px;font-size:14px;line-height:16px;color:#222;">D</div>
<div class="t" style="left:323px;width:60px;text-align:center;top:200px;font-size:14px;line-height:16px;color:#222;">E</div>
<div class="t" style="left:395px;width:60px;text-align:center;top:200px;font-size:14px;line-height:16px;color:#222;">F</div>
<div class="t" style="left:467px;width:60px;text-align:center;top:200px;font-size:14px;line-height:16px;color:#222;">G</div>
<div class="t" style="left:539px;width:60px;text-align:center;top:200px;font-size:14px;line-height:16px;color:#222;">H</div>
<div class="t" style="left:611px;width:60px;text-align:center;top:200px;font-size:14px;line-height:16px;color:#222;">I</div>
<div class="t" style="left:683px;width:60px;text-align:center;top:200px;font-size:14px;line-height:16px;color:#222;">J</div>
<div class="t" style="left:755px;width:60px;text-align:center;top:200px;font-size:14px;line-height:16px;color:#222;">K</div>
<div class="t" style="left:827px;width:60px;text-align:center;top:200px;font-size:14px;line-height:16px;color:#222;">L</div>
<div class="t" style="left:899px;width:60px;text-align:center;top:200px;font-size:14px;line-height:16px;color:#222;">M</div>
<div class="t" style="left:971px;width:60px;text-align:center;top:200px;font-size:14px;line-height:16px;color:#222;">N</div>
<div class="t" style="left:1043px;width:60px;text-align:center;top:200px;font-size:14px;line-height:16px;color:#222;">O</div>
<div class="t" style="left:1115px;width:60px;text-align:center;top:200px;font-size:14px;line-height:16px;color:#222;">P</div>
<div class="t" style="left:1187px;width:60px;text-align:center;top:200px;font-size:14px;line-height:16px;color:#222;">Q</div>
<div class="t" style="left:1259px;width:60px;text-align:center;top:200px;font-size:14px;line-height:16px;color:#222;">R</div>
<div class="t" style="left:0px;width:27px;text-align:center;top:221px;font-size:14px;line-height:16px;color:#217346;">1</div>
<div class="t" style="left:0px;width:27px;text-align:center;top:242px;font-size:14px;line-height:16px;color:#222;">2</div>
<div class="t" style="left:0px;width:27px;text-align:center;top:263px;font-size:14px;line-height:16px;color:#222;">3</div>
<div class="t" style="left:0px;width:27px;text-align:center;top:284px;font-size:14px;line-height:16px;color:#222;">4</div>
<div class="t" style="left:0px;width:27px;text-align:center;top:305px;font-size:14px;line-height:16px;color:#222;">5</div>
<div class="t" style="left:0px;width:27px;text-align:center;top:326px;font-size:14px;line-height:16px;color:#222;">6</div>
<div class="t" style="left:0px;width:27px;text-align:center;top:347px;font-size:14px;line-height:16px;color:#222;">7</div>
<div class="t" style="left:0px;width:27px;text-align:center;top:368px;font-size:14px;line-height:16px;color:#222;">8</div>
<div class="t" style="left:0px;width:27px;text-align:center;top:389px;font-size:14px;line-height:16px;color:#222;">9</div>
<div class="t" style="left:0px;width:27px;text-align:center;top:410px;font-size:14px;line-height:16px;color:#222;">10</div>
<div class="t" style="left:0px;width:27px;text-align:center;top:431px;font-size:14px;line-height:16px;color:#222;">11</div>
<div class="t" style="left:0px;width:27px;text-align:center;top:452px;font-size:14px;line-height:16px;color:#222;">12</div>
<div class="t" style="left:0px;width:27px;text-align:center;top:473px;font-size:14px;line-height:16px;color:#222;">13</div>
<div class="t" style="left:0px;width:27px;text-align:center;top:494px;font-size:14px;line-height:16px;color:#222;">14</div>
<div class="t" style="left:0px;width:27px;text-align:center;top:515px;font-size:14px;line-height:16px;color:#222;">15</div>
<div class="t" style="left:0px;width:27px;text-align:center;top:536px;font-size:14px;line-height:16px;color:#222;">16</div>
<div class="t" style="left:0px;width:27px;text-align:center;top:557px;font-size:14px;line-height:16px;color:#222;">17</div>
<div class="t" style="left:0px;width:27px;text-align:center;top:578px;font-size:14px;line-height:16px;color:#222;">18</div>
<div class="t" style="left:0px;width:27px;text-align:center;top:599px;font-size:14px;line-height:16px;color:#222;">19</div>
<div class="t" style="left:0px;width:27px;text-align:center;top:620px;font-size:14px;line-height:16px;color:#222;">20</div>
<div class="t" style="left:0px;width:27px;text-align:center;top:641px;font-size:14px;line-height:16px;color:#222;">21</div>
<div class="t" style="left:0px;width:27px;text-align:center;top:662px;font-size:14px;line-height:16px;color:#222;">22</div>
<div class="t" style="left:0px;width:27px;text-align:center;top:683px;font-size:14px;line-height:16px;color:#222;">23</div>
<div class="b" style="left:28px;top:217px;width:74px;height:23px;border:2px solid #217346;border-top-width:1px;border-left-width:1px"></div>
<div class="b" style="left:96px;top:235px;width:8px;height:8px;background:#fff"></div>
<div class="b" style="left:97px;top:236px;width:6px;height:6px;background:#217346"></div>
<div class="b" style="left:1347px;top:197px;width:19px;height:493px;background:#e6e6e6"></div>
<div class="b" style="left:1348px;top:199px;width:15px;height:15px;background:#fff;border:1px solid #ababab"></div>
<svg class="b" style="left:1352px;top:205px;" width="7" height="4" viewBox="0 0 7 4"><path d="M0 4h7L3.5 0z" fill="#6d6d6d"/></svg>
<div class="b" style="left:1348px;top:214px;width:15px;height:440px;background:#fff;border:1px solid #ababab"></div>
<div class="b" style="left:1348px;top:654px;width:15px;height:21px;background:#dadada"></div>
<div class="b" style="left:1348px;top:675px;width:15px;height:15px;background:#fff;border:1px solid #ababab"></div>
<svg class="b" style="left:1352px;top:681px;" width="7" height="4" viewBox="0 0 7 4"><path d="M0 0h7L3.5 4z" fill="#6d6d6d"/></svg>
<div class="b" style="left:0px;top:690px;width:1366px;height:27px;background:#e6e6e6"></div>
<div class="b" style="left:0px;top:689px;width:1347px;height:1px;background:#ababab"></div>
<svg class="b" style="left:28px;top:698px;" width="6" height="10" viewBox="0 0 6 10"><path d="M5 0v10L0 5z" fill="#c0c0c0"/></svg>
<svg class="b" style="left:56px;top:698px;" width="6" height="10" viewBox="0 0 6 10"><path d="M0 0v10L5 5z" fill="#c0c0c0"/></svg>
<div class="b" style="left:100px;top:692px;width:1px;height:22px;background:#9a9a9a"></div>
<div class="b" style="left:165px;top:692px;width:1px;height:22px;background:#9a9a9a"></div>
<div class="t " style="left:113px;top:696.03px;font-size:12px;line-height:14px;color:#444;">Sheet1</div>
<div class="t " style="left:178px;top:696.03px;font-size:12px;line-height:14px;color:#444;">Sheet2</div>
<div class="b" style="left:230px;top:689px;width:65px;height:25px;background:#fff;border-left:1px solid #ababab;border-right:1px solid #ababab"></div>
<div class="b" style="left:230px;top:711px;width:65px;height:3px;background:#217346"></div>
<div class="t " style="left:242px;top:696.03px;font-size:12px;line-height:14px;color:#217346;letter-spacing:0.1px"><b>Sheet3</b></div>
<svg class="b" style="left:327px;top:694px;" width="18" height="18" viewBox="0 0 18 18"><circle cx="9" cy="9" r="7.5" fill="none" stroke="#777" stroke-width="1.2"/><path d="M9 5v8 M5 9h8" stroke="#666" stroke-width="1.6"/></svg>
<div class="b" style="left:819px;top:698px;width:2px;height:2px;background:#a0a0a0"></div>
<div class="b" style="left:819px;top:702px;width:2px;height:2px;background:#a0a0a0"></div>
<div class="b" style="left:819px;top:706px;width:2px;height:2px;background:#a0a0a0"></div>
<div class="b" style="left:836px;top:696px;width:15px;height:15px;background:#fff;border:1px solid #ababab"></div>
<svg class="b" style="left:841px;top:700px;" width="4" height="7" viewBox="0 0 4 7"><path d="M4 0v7L0 3.5z" fill="#6d6d6d"/></svg>
<div class="b" style="left:850px;top:696px;width:453px;height:15px;background:#fff;border:1px solid #ababab"></div>
<div class="b" style="left:1303px;top:697px;width:27px;height:13px;background:#dadada"></div>
<div class="b" style="left:1330px;top:696px;width:15px;height:15px;background:#fff;border:1px solid #ababab"></div>
<svg class="b" style="left:1336px;top:700px;" width="4" height="7" viewBox="0 0 4 7"><path d="M0 0v7L4 3.5z" fill="#6d6d6d"/></svg>
<div class="b" style="left:0px;top:717px;width:1366px;height:22px;background:#f1f1f1"></div>
<div class="b" style="left:0px;top:717px;width:1366px;height:1px;background:#c8c8c8"></div>
<div class="b" style="left:0px;top:739px;width:1366px;height:1px;background:#111"></div>
<svg class="b" style="left:12px;top:732px;" width="32" height="8" viewBox="0 0 32 8"><ellipse cx="15" cy="12" rx="12" ry="9" fill="#c9cde0" stroke="#1f5fa0" stroke-width="1.2"/></svg>
<div class="t " style="left:7.5px;top:721.03px;font-size:12px;line-height:14px;color:#4a4a4a;letter-spacing:-0.55px">Ready</div>
<svg class="b" style="left:57px;top:720px;" width="16" height="16" viewBox="0 0 16 16"><circle cx="4" cy="3.8" r="2.9" fill="#777"/><rect x="8.3" y="2" width="5.7" height="2.4" fill="#777"/><path d="M13.5 4v9.5H2.6V8" fill="none" stroke="#777" stroke-width="1"/><path d="M4.5 7.6h1.8M7.5 7.6h1.8M10.5 7.6h1.8M4.5 9.5h1.8M7.5 9.5h1.8M10.5 9.5h1.8M4.5 11.5h1.8M7.5 11.5h1.8M10.5 11.5h1.8" stroke="#777" stroke-width="1"/></svg>
<div class="b" style="left:1075px;top:717px;width:37px;height:22px;background:#c6c6c6"></div>
<svg class="b" style="left:1086px;top:721px;" width="15" height="15" viewBox="0 0 15 15"><path d="M0.5 0.5h13v13h-13z M0.5 4.5h13 M0.5 9h13 M4.5 0.5v13 M9 0.5v13" fill="none" stroke="#666" stroke-width="1.2"/></svg>
<svg class="b" style="left:1124px;top:721px;" width="15" height="15" viewBox="0 0 15 15"><path d="M0.5 0.5h13v13h-13z M3 3.5h8v7H3z M5 5.5h4M5 7.5h4" fill="none" stroke="#666" stroke-width="1.1"/></svg>
<svg class="b" style="left:1162px;top:721px;" width="15" height="15" viewBox="0 0 15 15"><path d="M0.5 0.5h13v13h-13z M0.5 8.5h13 M4.5 0.5v8 M8.5 0.5v4" fill="none" stroke="#666" stroke-width="1.1"/></svg>
<div class="b" style="left:1193px;top:727px;width:6px;height:2px;background:#555"></div>
<div class="b" style="left:1203px;top:727px;width:100px;height:1px;background:#999"></div>
<div class="b" style="left:1251px;top:722px;width:3px;height:11px;background:#555"></div>
<div class="b" style="left:1307px;top:727px;width:8px;height:2px;background:#555"></div>
<div class="b" style="left:1310px;top:724px;width:2px;height:8px;background:#555"></div>
<div class="t " style="left:1329px;top:721.03px;font-size:12px;line-height:14px;color:#444;letter-spacing:-0.3px">100%</div>
<div class="b" style="left:1px;top:2px;width:219px;height:22px;border:2px solid #ed1c24;"></div>
<div class="b" style="left:9px;top:52px;width:1300px;height:101px;border:3px solid #a349a4;"></div>
<div class="b" style="left:249px;top:158px;width:1112px;height:29px;border:2px solid #ff7f27;"></div>
<div class="b" style="left:27px;top:215px;width:1320px;height:473px;border:2px solid #00a2e8;"></div>
<div class="b" style="left:2px;top:714px;width:415px;height:25px;border:2px solid #22b14c;"></div>
<svg class="b" style="left:192px;top:4px" width="50" height="50" viewBox="0 0 50 50"><circle cx="26" cy="26.5" r="20.1" fill="rgba(0,0,0,0.10)"/><circle cx="25" cy="25" r="19.3" fill="#fff"/><circle cx="25" cy="25" r="16.3" fill="#d9603b"/><path d="M25 17h3.4v14.4h-3.4V21.6c-1.1 1-2.4 1.6-3.9 2v-3.1c1.7-.6 3-1.7 3.9-3.5z" fill="#fff"/></svg>
<svg class="b" style="left:604px;top:58.5px" width="50" height="50" viewBox="0 0 50 50"><circle cx="26" cy="26.5" r="20.1" fill="rgba(0,0,0,0.10)"/><circle cx="25" cy="25" r="19.3" fill="#fff"/><circle cx="25" cy="25" r="16.3" fill="#8e62b4"/><g transform="translate(25 31.6) scale(0.9 1.05) translate(-25 -31.6)"><text x="25" y="31.6" text-anchor="middle" font-size="20.5" font-weight="bold" font-family="Liberation Sans" fill="#fff">2</text></g></svg>
<svg class="b" style="left:222px;top:160.5px" width="50" height="50" viewBox="0 0 50 50"><circle cx="26" cy="26.5" r="20.1" fill="rgba(0,0,0,0.10)"/><circle cx="25" cy="25" r="19.3" fill="#fff"/><circle cx="25" cy="25" r="16.3" fill="#e8904a"/><g transform="translate(25 31.6) scale(0.9 1.05) translate(-25 -31.6)"><text x="25" y="31.6" text-anchor="middle" font-size="20.5" font-weight="bold" font-family="Liberation Sans" fill="#fff">3</text></g></svg>
<svg class="b" style="left:315px;top:246px" width="50" height="50" viewBox="0 0 50 50"><circle cx="26" cy="26.5" r="20.1" fill="rgba(0,0,0,0.10)"/><circle cx="25" cy="25" r="19.3" fill="#fff"/><circle cx="25" cy="25" r="16.3" fill="#4a7db8"/><g transform="translate(25 31.6) scale(0.9 1.05) translate(-25 -31.6)"><text x="25" y="31.6" text-anchor="middle" font-size="20.5" font-weight="bold" font-family="Liberation Sans" fill="#fff">3</text></g></svg>
<svg class="b" style="left:390.3px;top:687px" width="50" height="50" viewBox="0 0 50 50"><circle cx="26" cy="26.5" r="20.1" fill="rgba(0,0,0,0.10)"/><circle cx="25" cy="25" r="19.3" fill="#fff"/><circle cx="25" cy="25" r="16.3" fill="#77a893"/><g transform="translate(25 31.6) scale(0.9 1.05) translate(-25 -31.6)"><text x="25" y="31.6" text-anchor="middle" font-size="20.5" font-weight="bold" font-family="Liberation Sans" fill="#fff">5</text></g></svg>
</body></html>
